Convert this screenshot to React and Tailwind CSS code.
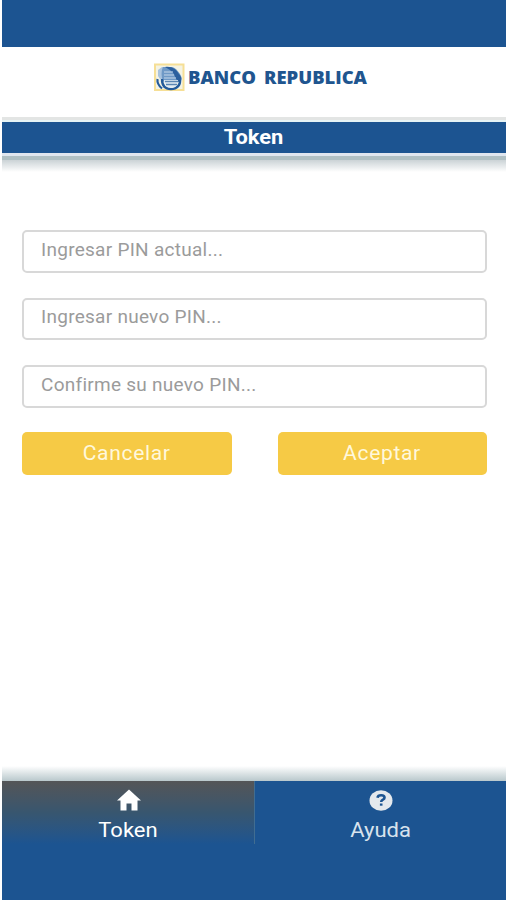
const fields = ["Ingresar PIN actual...", "Ingresar nuevo PIN...", "Confirme su nuevo PIN..."]

function BankLogo() {
  return (
    <svg className="h-[29px] w-8" viewBox="0 0 32 29" fill="none">
      <rect x="2" y="1.500" width="28.500" height="25.500" fill="#f4f3e4" stroke="#f6df96" strokeWidth="2" />
      <path d="M5 7L9 4H15V16H7L5 13Z" fill="#a9c3de" />
      <path d="M10 4H19C23 5 26 9 28 13C30 17 28 19 24 19H11C8 16 8 8 10 4Z" fill="#6f99c6" />
      <path d="M12 4C19 3 23 6 26 11C29 14 29 18 26 19L23 16L21 11L17 7Z" fill="#2c609e" />
      <path d="M11 9H20M11 12H21M11 15H23" stroke="#c6d8e9" strokeWidth="1.100" />
      <path d="M4.500 16C4 20 6 23 9 25.500" stroke="#235a9b" strokeWidth="2.200" />
      <path d="M9 16C9 22 12 26 18 26C24 26 27.500 22 27 17" stroke="#235a9b" strokeWidth="2.400" />
      <path d="M11 17H25C25 23 22 25 18 25C14 25 11 22 11 17Z" fill="#e3edf4" />
      <path d="M12 18.500H25M13 21.500H24" stroke="#5b86b3" strokeWidth="1.300" />
    </svg>
  )
}

function Header() {
  return (
    <header>
      <div className="h-[47px] bg-[#1c5491]"></div>
      <div className="flex h-[70px] items-start pl-[151px] pt-4">
        <BankLogo />
        <svg className="h-8 w-[190px]" viewBox="0 0 190 32" fill="#20558f">
          <text x="3" y="20.500" textLength="68" lengthAdjust="spacingAndGlyphs" className="font-['Open_Sans',sans-serif] text-[17.5px] font-extrabold">BANCO</text>
          <text x="79" y="20.500" textLength="103" lengthAdjust="spacingAndGlyphs" className="font-['Open_Sans',sans-serif] text-[17.5px] font-extrabold">REPUBLICA</text>
        </svg>
      </div>
      <div className="h-[3px] bg-[#e3e5e4]"></div>
      <div className="h-0.5 bg-[#e6f3f5]"></div>
      <h1 className="h-[31px] bg-[#1c5491] text-center text-[19.5px] font-bold leading-[31px] text-white">
        <span className="inline-block scale-x-[1.12]">Token</span>
      </h1>
      <div className="h-[3px] bg-[#dfe6ef]"></div>
      <div className="h-1 bg-[#b0c0c4]"></div>
      <div className="h-3 bg-linear-to-b from-[#cbd3d6] to-white"></div>
    </header>
  )
}

function PinForm() {
  return (
    <form className="flex-1 pl-5 pr-[19px] pt-[58px]">
      <div className="flex flex-col gap-[25px]">
        {fields.map((label) => (
          <input
            key={label}
            type="text"
            placeholder={label}
            className="block h-[42.5px] w-full rounded-[5px] border-2 border-[#d8d8d8] bg-white pb-1 pl-[17px] text-[19px] tracking-[0.27px] text-[#777] placeholder:text-[#9b9b9b]"
          />
        ))}
      </div>
      <div className="mt-[24px] flex justify-between">
        <button type="button" className="h-[43px] w-[210px] rounded-[5px] bg-[#f6ca45] pt-px text-[19.5px] tracking-[0.6px] text-[#fff8dc]">
          <span className="inline-block scale-x-[1.08]">Cancelar</span>
        </button>
        <button type="button" className="h-[43px] w-[209px] rounded-[5px] bg-[#f6ca45] pt-px text-[19.5px] tracking-[0.6px] text-[#fff8dc]">
          <span className="inline-block scale-x-[1.08]">Aceptar</span>
        </button>
      </div>
    </form>
  )
}

function TabBar() {
  return (
    <footer>
      <div className="h-[15px] bg-linear-to-b from-white to-[#b9c8cc]"></div>
      <nav className="flex h-[119px] items-start bg-[#1c5491] text-[20px] leading-6">
        <a className="flex h-[63px] w-[253px] flex-col items-center border-r border-[#416d91] bg-linear-to-b from-[#545557] via-[#38566f] to-[#1c5491] pt-2 text-white">
          <svg className="ml-px h-[22px] w-6" viewBox="0 0 24 22" fill="currentColor">
            <path d="M12 0.500L24 11.500H20.500V21.500H14.500V14.500H9.500V21.500H3.500V11.500H0Z" />
          </svg>
          <span className="mt-[7px] scale-x-[1.1]">Token</span>
        </a>
        <a className="flex h-[63px] flex-1 flex-col items-center pt-2 text-[#d8e3ed]">
          <svg className="h-[22px] w-6" viewBox="0 0 24 22" fill="none">
            <ellipse cx="12" cy="11.500" rx="11.500" ry="10.300" fill="#e4e9ed" />
            <path d="M8.500 8.700C9 5.500 15.500 5.500 15.500 8.700C15.500 11 12.200 10.500 12.200 13" stroke="#1c5491" strokeWidth="2.600" />
            <path d="M10.900 14.500H13.500V16.700H10.900Z" fill="#1c5491" />
          </svg>
          <span className="mt-[7px] scale-x-[1.1]">Ayuda</span>
        </a>
      </nav>
    </footer>
  )
}

export default function App() {
  return (
    <div className="h-[900px] w-[507px] bg-white pl-0.5 pr-px font-[Roboto,sans-serif]">
      <div className="flex h-full flex-col">
        <Header />
        <PinForm />
        <TabBar />
      </div>
    </div>
  )
}
